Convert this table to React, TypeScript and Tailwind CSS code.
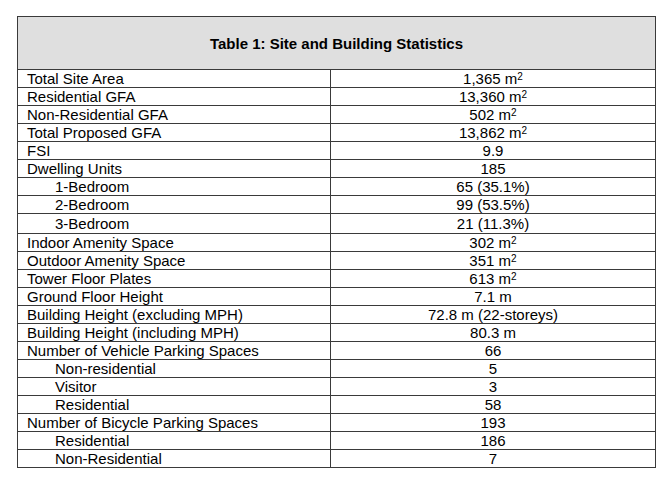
import React from "react";

type Row = { label: string; value: React.ReactNode; indent?: boolean; tall?: boolean };

const M2 = ({ n }: { n: string }) => (
  <>
    {n} m<sup className="text-[10px] top-[-0.45em]">2</sup>
  </>
);

const rows: Row[] = [
  { label: "Total Site Area", value: <M2 n="1,365" /> },
  { label: "Residential GFA", value: <M2 n="13,360" /> },
  { label: "Non-Residential GFA", value: <M2 n="502" /> },
  { label: "Total Proposed GFA", value: <M2 n="13,862" /> },
  { label: "FSI", value: "9.9" },
  { label: "Dwelling Units", value: "185" },
  { label: "1-Bedroom", value: "65 (35.1%)", indent: true },
  { label: "2-Bedroom", value: "99 (53.5%)", indent: true },
  { label: "3-Bedroom", value: "21 (11.3%)", indent: true, tall: true },
  { label: "Indoor Amenity Space", value: <M2 n="302" /> },
  { label: "Outdoor Amenity Space", value: <M2 n="351" /> },
  { label: "Tower Floor Plates", value: <M2 n="613" /> },
  { label: "Ground Floor Height", value: "7.1 m" },
  { label: "Building Height (excluding MPH)", value: "72.8 m (22-storeys)" },
  { label: "Building Height (including MPH)", value: "80.3 m" },
  { label: "Number of Vehicle Parking Spaces", value: "66" },
  { label: "Non-residential", value: "5", indent: true },
  { label: "Visitor", value: "3", indent: true },
  { label: "Residential", value: "58", indent: true },
  { label: "Number of Bicycle Parking Spaces", value: "193" },
  { label: "Residential", value: "186", indent: true },
  { label: "Non-Residential", value: "7", indent: true },
];

export default function App() {
  return (
    <div
      className="w-[662px] h-[482px] bg-white pt-[16px] pl-[17px] text-black"
      style={{ fontFamily: '"Liberation Sans", Arial, sans-serif' }}
    >
      <div className="w-[639px] border border-[#3a3a3a]">
        <div className="h-[53px] bg-[#dfdfdf] border-b border-[#3a3a3a] flex items-center justify-center">
          <span className="text-[15px] font-bold leading-none pt-[1px]">
            Table 1: Site and Building Statistics
          </span>
        </div>
        {rows.map((r, i) => {
          const last = i === rows.length - 1;
          return (
            <div
              key={i}
              className={`flex text-[15px] leading-[17px] ${
                last ? "h-[17px]" : "border-b border-[#3a3a3a]"
              } ${r.tall ? "h-[20px]" : last ? "" : "h-[18px]"}`}
            >
              <div
                className={`w-[313px] border-r border-[#3a3a3a] flex items-center whitespace-nowrap ${
                  r.indent ? "pl-[37px]" : "pl-[9px]"
                }`}
              >
                {r.label}
              </div>
              <div className="flex-1 flex items-center justify-center whitespace-nowrap">
                <span>{r.value}</span>
              </div>
            </div>
          );
        })}
      </div>
    </div>
  );
}
